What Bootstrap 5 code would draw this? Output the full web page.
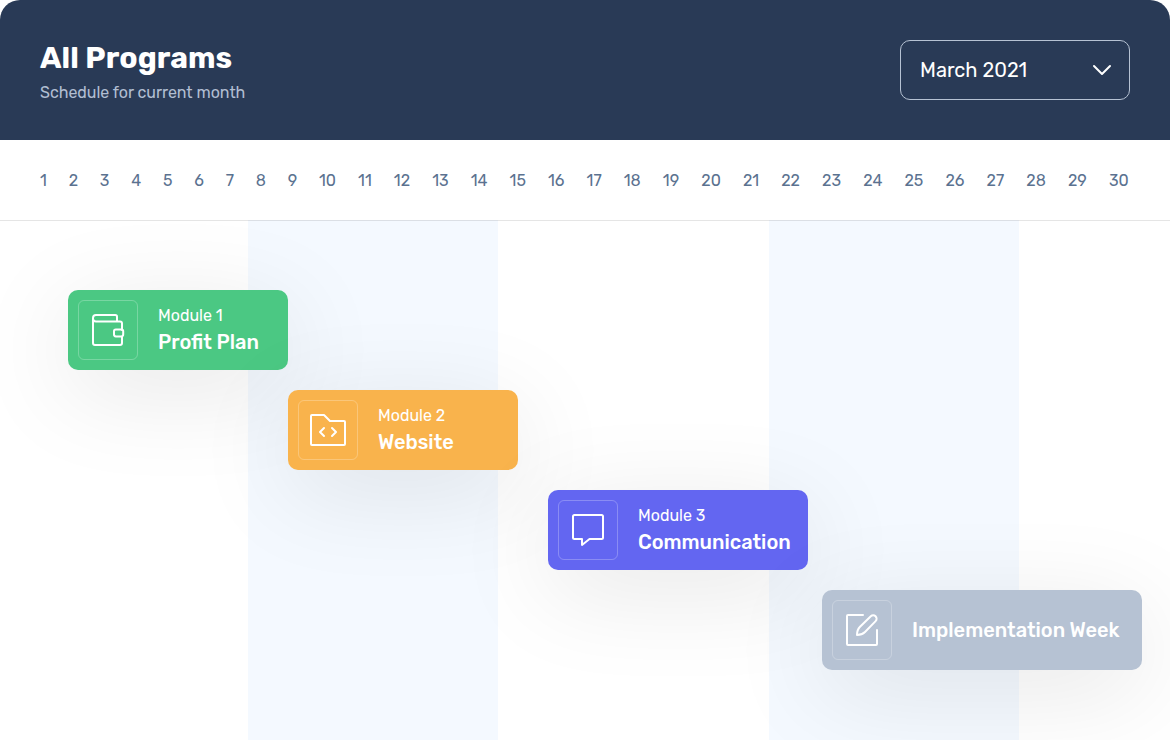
<!DOCTYPE html>
<html lang="en">
<head>
<meta charset="utf-8">
<meta name="viewport" content="width=device-width, initial-scale=1">
<title>All Programs</title>
<link href="https://cdn.jsdelivr.net/npm/bootstrap@5.3.0/dist/css/bootstrap.min.css" rel="stylesheet">
<style>
  body { font-family: Rubik, Inter, sans-serif; font-size: 16px; background: #fff; overflow: hidden; }
  .schedule { height: 740px; }
  .schedule-head { height: 140px; padding: 40px; background: #293a56; border-radius: 20px 20px 0 0; }
  .schedule-title { font-size: 30px; line-height: 36px; font-weight: 700; letter-spacing: .08px; }
  .schedule-sub { font-size: 16px; line-height: 20px; margin-top: 7px; letter-spacing: -.03px; color: #b1bed2; }
  .month-btn { width: 230px; height: 60px; padding: 0 17px 0 19px; font-size: 20px; border: 1px solid #b6c2d3; border-radius: 10px; color: #fff; }
  .month-btn:hover { color: #fff; border-color: #fff; }
  .days { height: 80px; padding: 2px 41px 0 40px; font-size: 16px; color: #5b7290; }
  .days span:nth-child(-n+9) { margin-right: -.3px; }
  .board { height: 520px; padding-top: 69px; gap: 20px; border-top: 1px solid rgba(0,0,0,.1);
    background: linear-gradient(90deg, transparent 248px, #f4f9ff 248px 498px, transparent 498px 769px, #f4f9ff 769px 1019px, transparent 1019px) border-box; }
  .program { height: 80px; padding: 10px; gap: 20px; border-radius: 10px; color: #fff; box-shadow: 0 20px 100px rgba(0,0,0,.1); }
  .program-icon { width: 60px; height: 60px; border: 1px solid rgba(255,255,255,.25); border-radius: 6px; }
  .program-icon svg { width: 60px; height: 60px; margin: -1px; }
  .program-module { font-size: 16px; line-height: 20px; padding-top: 1px; }
  .program-name { font-size: 20px; line-height: 26px; font-weight: 500; margin-top: 3px; }
  .program-name:only-child { margin-top: 0; }
  .p-profit { width: 220px; margin-left: 68px; background: #4bc883; }
  .p-website { width: 230px; margin-left: 288px; background: #f9b34c; }
  .p-comm { width: 260px; margin-left: 548px; background: #6366f1; }
  .p-week { width: 320px; margin-left: 822px; background: #b6c2d3; }
</style>
</head>
<body>
<main class="schedule d-flex flex-column">
  <header class="schedule-head d-flex justify-content-between align-items-start">
    <div>
      <h1 class="schedule-title text-white mb-0">All Programs</h1>
      <p class="schedule-sub mb-0">Schedule for current month</p>
    </div>
    <button type="button" class="btn month-btn d-flex justify-content-between align-items-center">
      <span>March 2021</span>
      <svg width="20" height="12" viewBox="0 0 20 12" fill="none" stroke="#fff" stroke-width="2" stroke-linecap="round" stroke-linejoin="round"><path d="M2 2l8 8 8-8"/></svg>
    </button>
  </header>
  <div class="days d-flex justify-content-between align-items-center">
    <span>1</span><span>2</span><span>3</span><span>4</span><span>5</span><span>6</span><span>7</span><span>8</span><span>9</span><span>10</span>
    <span>11</span><span>12</span><span>13</span><span>14</span><span>15</span><span>16</span><span>17</span><span>18</span><span>19</span><span>20</span>
    <span>21</span><span>22</span><span>23</span><span>24</span><span>25</span><span>26</span><span>27</span><span>28</span><span>29</span><span>30</span>
  </div>
  <section class="board d-flex flex-column">
    <article class="program p-profit d-flex align-items-center">
      <div class="program-icon flex-shrink-0"><svg viewBox="0 0 60 60" fill="none" stroke="#fff" stroke-width="2" stroke-linecap="round" stroke-linejoin="round"><path d="M39 21V16.700A1.700 1.700 0 0 0 37.300 15H18a3 3 0 0 0-3 3V43a2 2 0 0 0 2 2H42a2 2 0 0 0 2-2V37M15 18.400a3 3 0 0 0 3 3H42a2 2 0 0 1 2 2V30"/><rect x="36" y="29.400" width="9.200" height="7" rx="1.800"/></svg></div>
      <div><div class="program-module">Module 1</div><div class="program-name">Profit Plan</div></div>
    </article>
    <article class="program p-website d-flex align-items-center">
      <div class="program-icon flex-shrink-0"><svg viewBox="0 0 60 60" fill="none" stroke="#fff" stroke-width="2" stroke-linecap="round" stroke-linejoin="round"><path d="M14 15H26l6 6H46a1 1 0 0 1 1 1V44a1 1 0 0 1-1 1H14a1 1 0 0 1-1-1V16a1 1 0 0 1 1-1zM26 28l-4 4 4 4M34 28l4 4-4 4"/></svg></div>
      <div><div class="program-module">Module 2</div><div class="program-name">Website</div></div>
    </article>
    <article class="program p-comm d-flex align-items-center">
      <div class="program-icon flex-shrink-0"><svg viewBox="0 0 60 60" fill="none" stroke="#fff" stroke-width="2" stroke-linecap="round" stroke-linejoin="round"><path d="M16.500 15H43.500A1.500 1.500 0 0 1 45 16.500V37.500A1.500 1.500 0 0 1 43.500 39H31.500L24 45V39H16.500A1.500 1.500 0 0 1 15 37.500V16.500A1.500 1.500 0 0 1 16.500 15z"/></svg></div>
      <div><div class="program-module">Module 3</div><div class="program-name">Communication</div></div>
    </article>
    <article class="program p-week d-flex align-items-center">
      <div class="program-icon flex-shrink-0"><svg viewBox="0 0 60 60" fill="none" stroke="#fff" stroke-width="2" stroke-linecap="round" stroke-linejoin="round"><path d="M31 15H16a1 1 0 0 0-1 1V44a1 1 0 0 0 1 1H44a1 1 0 0 0 1-1V30M25 35c0-3 .8-6 3-8.200L38.800 16.300a3.250 3.250 0 0 1 4.800 4.800L33 32c-2 2-5 3-8 3z"/></svg></div>
      <div><div class="program-name">Implementation Week</div></div>
    </article>
  </section>
</main>
<script src="https://cdn.jsdelivr.net/npm/bootstrap@5.3.0/dist/js/bootstrap.bundle.min.js"></script>
</body>
</html>
